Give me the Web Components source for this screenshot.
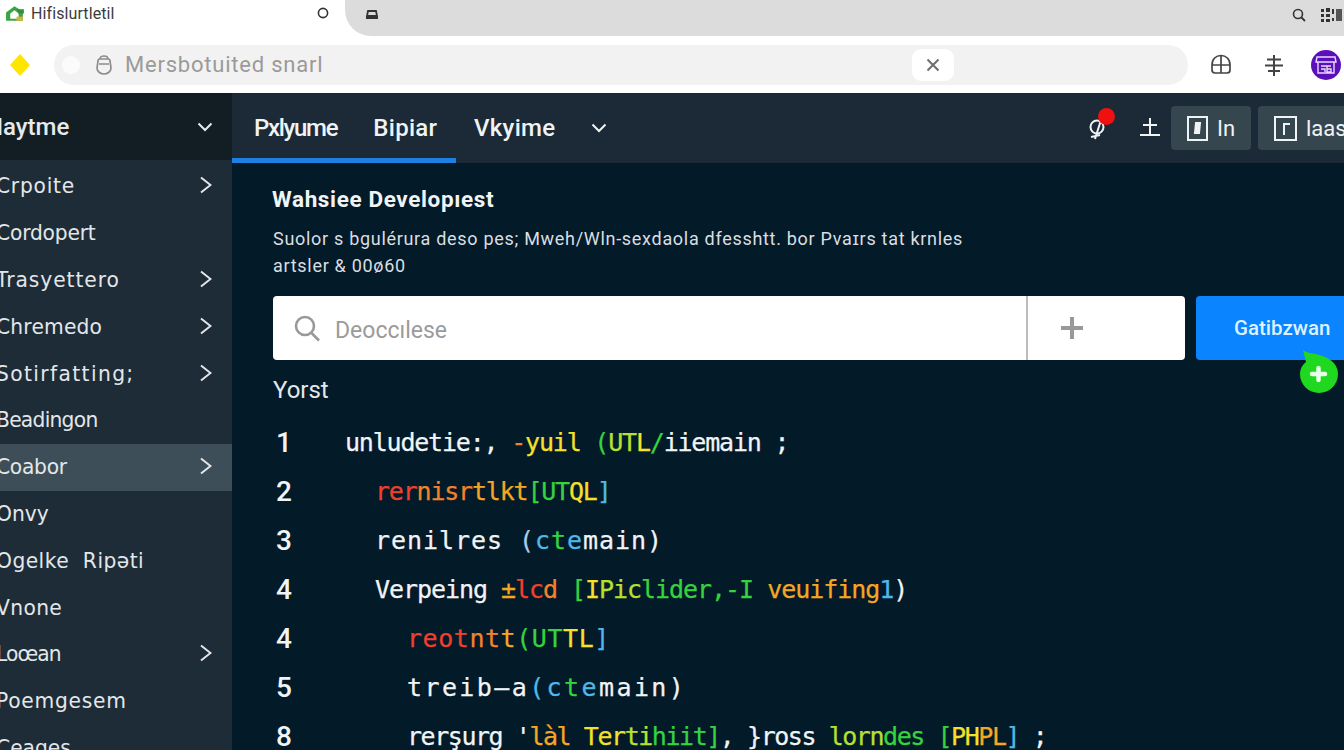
<!DOCTYPE html>
<html>
<head>
<meta charset="utf-8">
<style>
  html, body { margin: 0; height: 750px; overflow: hidden; background: #031a29; }
  body { font-family: Roboto, "Liberation Sans", sans-serif; }
  .app { display: grid; grid-template-columns: 232px 1fr; height: 657px; overflow: hidden; }
  .right { display: flex; flex-direction: column; min-width: 0; overflow: hidden; }
</style>
</head>
<body>
<browser-bar></browser-bar>
<div class="app">
  <side-bar title="Haytme">
    <side-item arrow style="letter-spacing:.8px">Crpoite</side-item>
    <side-item style="letter-spacing:-.2px">Cordopert</side-item>
    <side-item arrow style="letter-spacing:1px">Trasyettero</side-item>
    <side-item arrow style="letter-spacing:.2px">Chremedo</side-item>
    <side-item arrow style="letter-spacing:1.5px">Sotirfatting;</side-item>
    <side-item style="letter-spacing:-.8px">Beadingon</side-item>
    <side-item arrow active style="letter-spacing:-.3px">Coabor</side-item>
    <side-item>Onvy</side-item>
    <side-item style="letter-spacing:.5px">Ogelke&nbsp; Ripəti</side-item>
    <side-item style="letter-spacing:.4px">Vnone</side-item>
    <side-item arrow style="letter-spacing:-1px">Loœan</side-item>
    <side-item style="letter-spacing:.8px">Poemgesem</side-item>
    <side-item>Ceages</side-item>
  </side-bar>
  <div class="right">
    <top-nav></top-nav>
    <main-panel>
      <search-row></search-row>
      <code-view></code-view>
    </main-panel>
  </div>
</div>

<script>
class BrowserBar extends HTMLElement {
  constructor() {
    super();
    this.attachShadow({ mode: 'open' });
    this.shadowRoot.innerHTML = `
      <style>
        :host { display: block; height: 93px; background: #fff; color: #444; overflow: hidden; }
        .tabs { display: flex; height: 36px; }
        .tab { width: 345px; box-sizing: border-box; display: flex; align-items: center; padding: 0 15px 10px 5px; gap: 5px; font-size: 16px; letter-spacing: .1px; color: #3c3c3c; }
        .tab span { flex: 1; }
        .strip { flex: 1; background: #dcdcdc; border-bottom-left-radius: 26px; display: flex; align-items: center; padding: 0 14px 6px 20px; gap: 13px; }
        .strip .fill { flex: 1; }
        .addr-row { display: flex; align-items: center; height: 57px; box-sizing: border-box; }
        .star { width: 54px; display: flex; justify-content: center; padding-right: 14px; box-sizing: border-box; }
        .addr { width: 1134px; height: 40px; border-radius: 20px; background: #f2f2f2; display: flex; align-items: center; box-sizing: border-box; padding-left: 8px; font-size: 22px; color: #9a9a9a; }
        .dot { width: 18px; height: 18px; border-radius: 50%; background: #fbfbfb; margin-right: 14px; }
        .addr .text { margin-left: 11px; width: 787px; letter-spacing: .78px; }
        .close { width: 42px; height: 32px; background: #fff; border-radius: 9px; display: flex; align-items: center; justify-content: center; }
        .acts { flex: 1; display: flex; align-items: center; padding-left: 21px; gap: 30px; }
        .avatar { width: 30px; height: 30px; border-radius: 50%; background: #5a0fb8; display: flex; align-items: center; justify-content: center; margin-left: -4px; flex: none; }
      </style>
      <div class="tabs">
        <div class="tab">
          <svg width="21" height="21" viewBox="0 0 20 20"><path d="M1 9 9 3l8 5v9H1z" fill="#3aa545"/><path d="M5 10l4-3 4 3v5H5z" fill="#fff"/><path d="M11 6h7v4h-5z" fill="#2f8f3c"/><rect x="11" y="13" width="6" height="4" fill="#d8b23a"/></svg>
          <span>Hifislurtletil</span>
          <svg width="14" height="14" viewBox="0 0 14 14"><circle cx="7" cy="7" r="4.600" fill="none" stroke="#333" stroke-width="1.600"/></svg>
        </div>
        <div class="strip">
          <svg width="14" height="12" viewBox="0 0 14 12"><path d="M3 2h8l1 5H2z" fill="none" stroke="#333" stroke-width="1.800"/><rect x="1" y="7" width="12" height="3" fill="#333"/></svg>
          <span class="fill"></span>
          <svg width="16" height="16" viewBox="0 0 16 16"><circle cx="7" cy="7" r="4.500" fill="none" stroke="#333" stroke-width="1.600"/><path d="M10.500 10.500 14 14" stroke="#333" stroke-width="1.800"/></svg>
          <svg width="22" height="14" viewBox="0 0 22 14" style="margin-right:-12px"><g fill="#333"><rect x="1" y="1" width="3" height="3"/><rect x="6" y="0" width="4" height="4"/><rect x="1" y="6" width="3" height="3"/><rect x="6" y="6" width="4" height="3"/><rect x="1" y="11" width="3" height="3"/><rect x="6" y="11" width="4" height="3"/><rect x="12" y="1" width="2" height="5"/><rect x="12" y="10" width="2" height="3"/><rect x="16" y="1" width="6" height="12" fill="#555"/></g></svg>
        </div>
      </div>
      <div class="addr-row">
        <div class="star"><svg width="20" height="22" viewBox="0 0 20 22"><path d="M10 0 20 11 10 22 0 11z" fill="#ffe600"/></svg></div>
        <div class="addr">
          <span class="dot"></span>
          <svg width="20" height="22" viewBox="0 0 20 22"><path d="M6 5c0-4 8-4 8 0M4 7c0-1 1-2 2-2h8c1 0 2 1 2 2l1 7c0 4-4 6-7 6s-7-2-7-6z" fill="none" stroke="#8c8c8c" stroke-width="1.700"/><path d="M5 10h10" stroke="#8c8c8c" stroke-width="1.500"/></svg>
          <span class="text">Mersbotuited snarl</span>
          <span class="close"><svg width="14" height="14" viewBox="0 0 14 14"><path d="M1.500 1.500l11 11M12.500 1.500l-11 11" stroke="#6e6e6e" stroke-width="2"/></svg></span>
        </div>
        <div class="acts">
          <svg width="24" height="24" viewBox="0 0 24 24" fill="none" stroke="#444" stroke-width="1.700"><path d="M3 12C3 6 7 2.500 12 2.500S21 6 21 12v5c0 2-1 3-3 3H6c-2 0-3-1-3-3z"/><path d="M3 12h18M12 3v17"/></svg>
          <svg width="22" height="24" viewBox="0 0 22 24" fill="none" stroke="#444" stroke-width="2"><path d="M4 6.500h14M2 12.500h18M5 18h12M11 2v21"/></svg>
          <span class="avatar"><svg width="22" height="20" viewBox="0 0 22 20" fill="none" stroke="#e9d9ff" stroke-width="1.400"><path d="M2 2h18l1 5H1zM3 7v11h16V7M6 11h10M6 14h4v3M12 11v6h4v-3h-4"/></svg></span>
        </div>
      </div>`;
  }
}
customElements.define('browser-bar', BrowserBar);

class SideBar extends HTMLElement {
  constructor() {
    super();
    this.attachShadow({ mode: 'open' });
    this.shadowRoot.innerHTML = `
      <style>
        :host { display: block; background: #1e2c38; color: #e6eaec; overflow: hidden; height: 657px; }
        .head { height: 67px; background: #131d24; display: flex; align-items: center; justify-content: space-between; padding: 0 19px 0 0; box-sizing: border-box; font-size: 24px; font-weight: 500; }
        .head span { margin-left: -14px; }
        .list { padding-top: 3px; }
      </style>
      <div class="head"><span></span>
        <svg width="16" height="10" viewBox="0 0 16 10" fill="none" stroke="#e6eaec" stroke-width="2"><path d="M1.500 1.500 8 8l6.500-6.500"/></svg>
      </div>
      <div class="list"><slot></slot></div>`;
  }
  connectedCallback() {
    this.shadowRoot.querySelector('.head span').textContent = this.getAttribute('title');
  }
}
customElements.define('side-bar', SideBar);

class SideItem extends HTMLElement {
  constructor() {
    super();
    this.attachShadow({ mode: 'open' });
    this.shadowRoot.innerHTML = `
      <style>
        :host { display: flex; align-items: center; justify-content: space-between; height: 46.800px; padding-right: 20px; box-sizing: border-box; font-family: "DejaVu Sans", sans-serif; font-size: 22px; color: #e3e7e9; white-space: nowrap; }
        :host([active]) { background: #3e4e58; }
        .label { margin: -1px 0 0 -4px; transform: scaleX(.92); transform-origin: left; }
        svg { display: none; }
        :host([arrow]) svg { display: block; margin-top: -2px; }
      </style>
      <span class="label"><slot></slot></span>
      <svg width="12" height="18" viewBox="0 0 12 18" fill="none" stroke="#e3e7e9" stroke-width="2"><path d="M1 1.500 10.500 9 1 16.500"/></svg>`;
  }
}
customElements.define('side-item', SideItem);

class TopNav extends HTMLElement {
  constructor() {
    super();
    this.attachShadow({ mode: 'open' });
    this.shadowRoot.innerHTML = `
      <style>
        :host { display: flex; height: 70px; background: #1b2a36; color: #f0f3f4; align-items: flex-start; box-sizing: border-box; position: relative; flex: none; }
        .tabs { display: flex; width: 224px; height: 70px; border-bottom: 5px solid #1f80e4; box-sizing: border-box; padding: 21px 0 0 22px; font-size: 24px; font-weight: 500; gap: 36px; white-space: nowrap; }
        .tabs .first { letter-spacing: -1.300px; }
        .tabs .second { letter-spacing: .3px; }
        .third { display: flex; align-items: flex-start; padding: 21px 0 0 18px; font-size: 24px; font-weight: 500; gap: 36px; letter-spacing: .3px; }
        .third svg { margin-top: 9px; }
        .fill { flex: 1; }
        .tools { display: flex; align-items: center; height: 70px; box-sizing: border-box; }
        .bell { position: relative; width: 24px; height: 28px; margin-right: 29px; }
        .bell i { position: absolute; right: -5px; top: -6px; width: 17px; height: 17px; border-radius: 50%; background: #f01010; }
        .btn { height: 44px; background: #36464f; border-radius: 4px; display: flex; align-items: center; gap: 9px; font-size: 22px; box-sizing: border-box; padding-left: 16px; }
        .btn.a { width: 80px; margin-left: 10px; }
        .btn.b { width: 90px; margin-left: 7px; margin-right: -4px; overflow: hidden; white-space: nowrap; }
      </style>
      <div class="tabs"><span class="first">Pxlyume</span><span class="second">Bipiar</span></div>
      <div class="third"><span>Vkyime</span>
        <svg width="16" height="10" viewBox="0 0 16 10" fill="none" stroke="#f0f3f4" stroke-width="2"><path d="M1.500 1.500 8 8l6.500-6.500"/></svg>
      </div>
      <span class="fill"></span>
      <div class="tools">
        <div class="bell">
          <svg width="24" height="28" viewBox="0 0 24 28" fill="none" stroke="#f0f3f4" stroke-width="2"><circle cx="11" cy="13" r="6.500"/><path d="M15 6 9 25M5 23l9-2"/></svg>
          <i></i>
        </div>
        <svg width="22" height="20" viewBox="0 0 22 20" fill="none" stroke="#f0f3f4" stroke-width="2"><path d="M4 7h14M1 17h20M11 0v17"/></svg>
        <div class="btn a">
          <svg width="21" height="25" viewBox="0 0 21 25" fill="none" stroke="#f0f3f4" stroke-width="2"><rect x="1" y="1" width="19" height="23"/><path d="M9 7h4l-1 10H8z" fill="#f0f3f4"/></svg>
          <span>In</span>
        </div>
        <div class="btn b">
          <svg width="23" height="25" viewBox="0 0 23 25" fill="none" stroke="#f0f3f4" stroke-width="2" style="flex:none"><rect x="1" y="1" width="21" height="23"/><path d="M10 19V8h6"/></svg>
          <span>laas</span>
        </div>
      </div>`;
  }
}
customElements.define('top-nav', TopNav);

class MainPanel extends HTMLElement {
  constructor() {
    super();
    this.attachShadow({ mode: 'open' });
    this.shadowRoot.innerHTML = `
      <style>
        :host { display: block; flex: 1; background: #031a29; color: #f1f4f5; padding: 21px 0 0 41px; overflow: hidden; }
        h1 { margin: 0 0 11px; font-size: 22.500px; font-weight: 700; line-height: 30px; white-space: nowrap; letter-spacing: .63px; margin-left: -1px; }
        p { margin: 0 0 17px; font-size: 18px; line-height: 27px; color: #d9dee1; width: 720px; letter-spacing: .7px; white-space: nowrap; }
      </style>
      <h1>Wahsiee Developıest</h1>
      <p>Suolor s bgulérura deso pes; Mweh/Wln-sexdaola dfesshtt. bor Pvaɪrs tat krnles<br>artsler &amp; 00ø60</p>
      <slot></slot>`;
  }
}
customElements.define('main-panel', MainPanel);

class SearchRow extends HTMLElement {
  constructor() {
    super();
    this.attachShadow({ mode: 'open' });
    this.shadowRoot.innerHTML = `
      <style>
        :host { display: flex; gap: 11px; height: 64px; position: relative; margin-right: -4px; }
        .box { width: 912px; background: #fff; border-radius: 4px; display: flex; align-items: center; color: #9b9b9b; font-size: 23px; }
        .q { display: flex; align-items: center; gap: 14px; padding-left: 21px; width: 755px; box-sizing: border-box; height: 100%; border-right: 2px solid #bcbcbc; }
        .q span { padding-top: 4px; }
        .plus { flex: 1; display: flex; justify-content: center; padding-right: 70px; }
        .go { flex: 1; background: #0a84ff; border-radius: 4px 0 0 4px; color: #dff1ff; font-size: 20.500px; font-weight: 500; display: flex; align-items: center; padding-left: 38px; }
        .bubble { position: absolute; left: 1026px; top: 54px; width: 40px; height: 44px; }
      </style>
      <div class="box">
        <div class="q">
          <svg width="27" height="27" viewBox="0 0 27 27" fill="none" stroke="#999" stroke-width="2.600"><circle cx="11" cy="11" r="9"/><path d="M17.500 18 25 25.500"/></svg>
          <span>Deoccılese</span>
        </div>
        <div class="plus"><svg width="24" height="24" viewBox="0 0 24 24"><path d="M12 1v22M1 12h22" stroke="#999" stroke-width="4"/></svg></div>
      </div>
      <div class="go">Gatibzwan</div>
      <svg class="bubble" viewBox="0 0 40 44"><path d="M4 0c3 3 9 3 16 5 10 2 19 9 19 19a19 19 0 1 1-38 0c0-5 2-9 6-12z" fill="#1fd81f"/><path d="M19.500 18v12M13 24h13" stroke="#eaffea" stroke-width="4.500" stroke-linecap="round"/></svg>`;
  }
}
customElements.define('search-row', SearchRow);

// each line is [number, indent, letter spacing, runs]
const C = { w: '#f1f4f5', r: '#f0402c', o: '#f3822a', y: '#f5e02a', g: '#35d43e', l: '#b7e02f', b: '#4fb8ea', a: '#f5a623', p: '#a9cfe6' };
const CODE = [
  ['1', 0, -1.2, [['w','unludetie:,'],['o',' -'],['y','yuil '],['g','('],['l','UT'],['y','L'],['g','/'],['w','iiemain ;']]],
  ['2', 30, -1.2, [['r','rer'],['o','nisr'],['a','tlkt'],['g','[UT'],['y','QL'],['b',']']]],
  ['3', 30, .95, [['w','renilres '],['p','('],['b','c'],['g','t'],['b','e'],['w','main)']]],
  ['4', 30, -1.05, [['w','Verpeing '],['a','±'],['r','lc'],['o','d '],['g','['],['y','I'],['l','Pic'],['g','lider,-I '],['a','veuifing'],['b','1'],['w',')']]],
  ['4', 62, .55, [['r','reot'],['o','nt'],['a','t'],['g','(UT'],['y','TL'],['b',']']]],
  ['5', 62, 2.4, [['w','treib—a'],['b','(c'],['g','t'],['b','e'],['w','main)']]],
  ['8', 62, -1.45, [['w',"rerşurg '"],['a','làl '],['y','Ter'],['l','ti'],['g','hiit]'],['w',', }ross '],['l','lorn'],['g','des '],['g','['],['y','PH'],['a','PL'],['b',']'],['w',' ;']]],
];

class CodeView extends HTMLElement {
  constructor() {
    super();
    this.attachShadow({ mode: 'open' });
    const rows = CODE.map(([n, indent, ls, runs]) => {
      const spans = runs.map(([c, t]) => `<span style="color:${C[c]}">${t}</span>`).join('');
      return `<div class="n">${n}</div><div class="c" style="padding-left:${indent}px;letter-spacing:${ls}px">${spans}</div>`;
    }).join('');
    this.shadowRoot.innerHTML = `
      <style>
        :host { display: block; }
        .title { font-size: 24px; line-height: 30px; margin: 15px 0 13px; color: #e4e8ea; }
        .grid { display: grid; grid-template-columns: 72px 1fr; grid-auto-rows: 49px; align-items: center; }
        .n { font-family: Roboto, sans-serif; font-size: 28px; font-weight: 500; color: #f1f4f5; padding-left: 3px; }
        .c { font-family: "DejaVu Sans Mono", monospace; font-size: 25px; white-space: pre; -webkit-text-stroke: .25px currentColor; }
      </style>
      <div class="title">Yorst</div>
      <div class="grid">${rows}</div>`;
  }
}
customElements.define('code-view', CodeView);
</script>
</body>
</html>
